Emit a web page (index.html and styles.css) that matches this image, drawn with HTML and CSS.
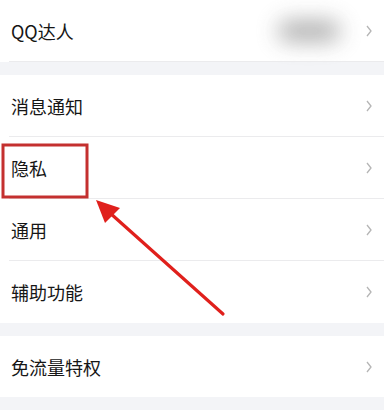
FILE: index.html
```html
<!DOCTYPE html>
<html lang="zh">
<head>
<meta charset="utf-8">
<link rel="stylesheet" href="styles.css">
</head>
<body>
<div class="page">
  <div class="group">
    <div class="row">
      <span class="label">QQ达人</span>
      <span class="blur"></span>
      <svg class="chev" viewBox="0 0 6 12"><path d="M1 1 L5 6 L1 11" /></svg>
    </div>
  </div>
  <div class="group">
    <div class="row"><span class="label">消息通知</span><svg class="chev" viewBox="0 0 6 12"><path d="M1 1 L5 6 L1 11" /></svg></div>
    <div class="row"><span class="label">隐私</span><svg class="chev" viewBox="0 0 6 12"><path d="M1 1 L5 6 L1 11" /></svg></div>
    <div class="row"><span class="label">通用</span><svg class="chev" viewBox="0 0 6 12"><path d="M1 1 L5 6 L1 11" /></svg></div>
    <div class="row last"><span class="label">辅助功能</span><svg class="chev" viewBox="0 0 6 12"><path d="M1 1 L5 6 L1 11" /></svg></div>
  </div>
  <div class="group">
    <div class="row last"><span class="label">免流量特权</span><svg class="chev" viewBox="0 0 6 12"><path d="M1 1 L5 6 L1 11" /></svg></div>
  </div>
  <svg class="annot" viewBox="0 0 384 410">
    <rect x="3" y="145" width="84" height="52" fill="none" stroke="#c4302f" stroke-width="3"/>
    <line x1="223" y1="314" x2="110" y2="213" stroke="#e0201c" stroke-width="3.2" stroke-linecap="round"/>
    <polygon points="96,200 120,208 105,223" fill="#e0201c"/>
  </svg>
</div>
</body>
</html>
```
FILE: styles.css
```css
html, body {
  margin: 0;
  padding: 0;
}
body {
  background: #f3f4f7;
  font-family: "Noto Sans CJK SC", "Noto Sans", sans-serif;
  color: #161616;
}
.page {
  position: relative;
  width: 384px;
  height: 410px;
  display: flex;
  flex-direction: column;
  gap: 13px;
  overflow: hidden;
}
.group {
  background: #ffffff;
}
.row {
  position: relative;
  height: 62px;
  display: flex;
  align-items: center;
  padding: 0 12px 0 11px;
  box-sizing: border-box;
}
.row::after {
  content: "";
  position: absolute;
  left: 9px;
  right: 0;
  bottom: 0;
  height: 1px;
  background: #ebebed;
}
.row.last::after {
  display: none;
}
.group:last-of-type .row {
  height: 61px;
}
.label {
  flex: 1;
  font-size: 18px;
  line-height: 24px;
}
.blur {
  width: 62px;
  height: 20px;
  margin-right: 26px;
  border-radius: 10px;
  background: #a2a2a2;
  filter: blur(11px);
  opacity: 0.9;
}
.chev {
  width: 6px;
  height: 12px;
  fill: none;
  stroke: #b5b5b5;
  stroke-width: 1.3;
}
.annot {
  position: absolute;
  left: 0;
  top: 0;
  width: 384px;
  height: 410px;
  pointer-events: none;
}
```
